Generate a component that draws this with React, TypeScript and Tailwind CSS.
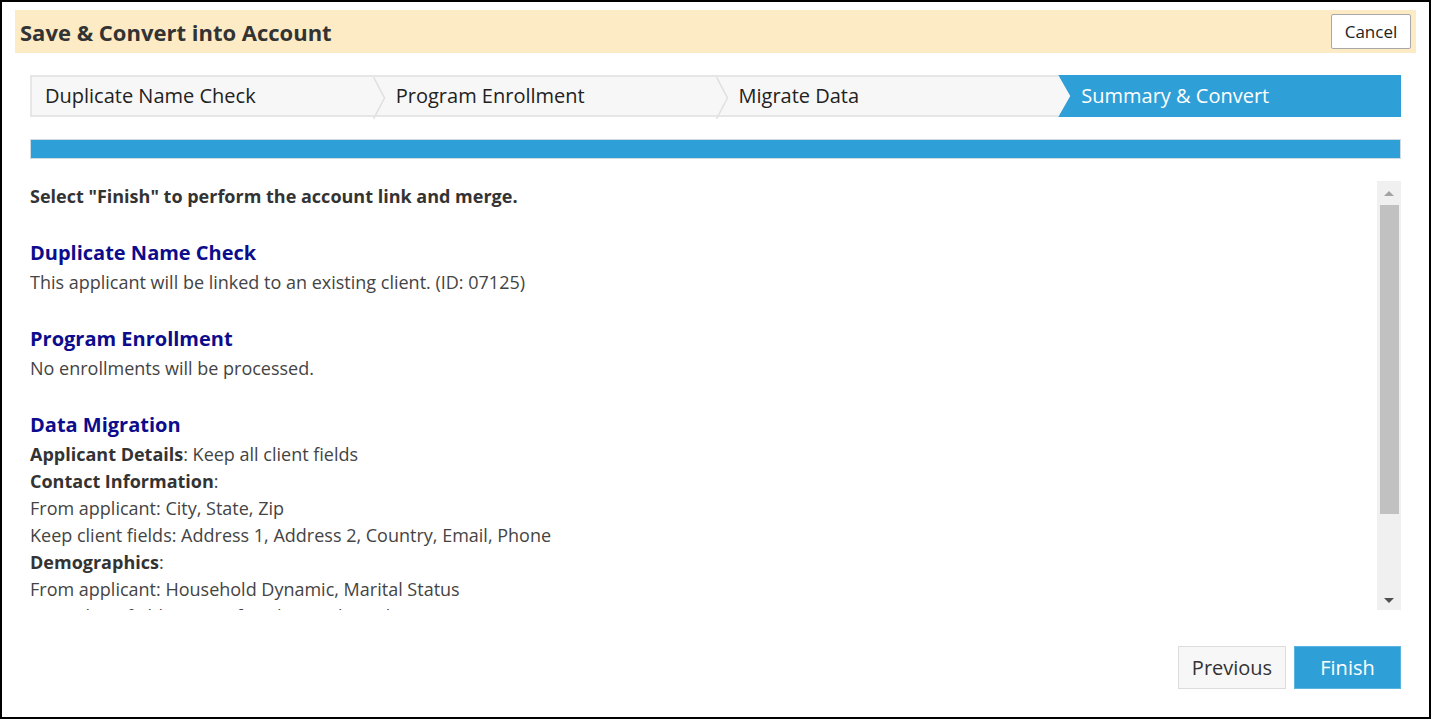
import { useState } from "react";

type Step = { label: string; active?: boolean };

const STEPS: Step[] = [
  { label: "Duplicate Name Check" },
  { label: "Program Enrollment" },
  { label: "Migrate Data" },
  { label: "Summary & Convert", active: true },
];

function Chevron() {
  return (
    <svg className="pointer-events-none absolute left-0 top-0 h-[42px] w-[14px]" viewBox="0 0 14 42" fill="none">
      <path d="M0.5 0 L11.5 21 L0.5 42" stroke="#e0e0e0" strokeWidth="1.5" />
    </svg>
  );
}

function Stepper() {
  return (
    <div className="grid h-[42px] grid-cols-4 bg-[#f7f7f7]">
      {STEPS.map((step, i) =>
        step.active ? (
          <div key={step.label} className="relative flex items-center">
            <div className="absolute inset-0 bg-[#2f9fd7] [clip-path:polygon(0_0,100%_0,100%_100%,0_100%,12px_50%)]" />
            <span className="relative pl-[23px] text-[20px] text-white">{step.label}</span>
          </div>
        ) : (
          <div
            key={step.label}
            className={`relative flex items-center border-y-2 border-[#e6e6e6] ${i === 0 ? "border-l-2 pl-[13px]" : "pl-[23px]"}`}
          >
            {i > 0 && <Chevron />}
            <span className="text-[20px] text-[#222]">{step.label}</span>
          </div>
        )
      )}
    </div>
  );
}

function Scrollbar() {
  return (
    <div className="flex w-[24px] shrink-0 flex-col bg-[#f0f0f0]">
      <div className="flex h-[24px] items-center justify-center">
        <div className="h-0 w-0 border-x-[5px] border-b-[5px] border-x-transparent border-b-[#a3a3a3]" />
      </div>
      <div className="ml-[3px] mr-[2px] h-[309px] bg-[#c1c1c1]" />
      <div className="flex-1" />
      <div className="flex h-[18px] items-start justify-center pt-[6px]">
        <div className="h-0 w-0 border-x-[5px] border-t-[5px] border-x-transparent border-t-[#505050]" />
      </div>
    </div>
  );
}

function Section({ title, children }: { title: string; children: React.ReactNode }) {
  return (
    <section className="mt-[28px]">
      <h2 className="text-[20px] font-bold leading-[30px] text-[#0c0c8c]">{title}</h2>
      <div className="mt-[1px]">{children}</div>
    </section>
  );
}

export default function App() {
  const [open, setOpen] = useState(true);

  return (
    <div className="h-[720px] w-[1433px] bg-white font-['Open_Sans',sans-serif] text-[#444]">
      <div className="flex h-[719px] w-[1431px] flex-col border-2 border-black">
        <header className="mx-[13px] mt-[8px] flex h-[43px] items-center justify-between bg-[#fdebc5] pl-[5px] pr-[5px]">
          <h1 className="pt-[1px] text-[22px] font-bold text-[#333]">Save &amp; Convert into Account</h1>
          <button
            onClick={() => setOpen(!open)}
            className="h-[35px] w-[80px] rounded-[2px] border border-[#a8a8a8] bg-white text-[17px] text-[#222]"
          >
            Cancel
          </button>
        </header>

        <div className="mx-[28px] mt-[22px]">
          <Stepper />
          <div className="mt-[22px] h-[20px] border border-[#cfdbe3] bg-[#2f9fd7]" />
        </div>

        <div className="mx-[28px] mt-[22px] flex h-[429px]">
          <div className="flex-1 overflow-hidden pt-[2px] text-[18px] leading-[27px]">
            <p className="font-bold text-[#333]">Select "Finish" to perform the account link and merge.</p>

            <Section title="Duplicate Name Check">
              <p>This applicant will be linked to an existing client. (ID: 07125)</p>
            </Section>

            <Section title="Program Enrollment">
              <p>No enrollments will be processed.</p>
            </Section>

            <Section title="Data Migration">
              <p>
                <b className="text-[#333]">Applicant Details</b>: Keep all client fields
              </p>
              <p>
                <b className="text-[#333]">Contact Information</b>:
              </p>
              <p>From applicant: City, State, Zip</p>
              <p>Keep client fields: Address 1, Address 2, Country, Email, Phone</p>
              <p>
                <b className="text-[#333]">Demographics</b>:
              </p>
              <p>From applicant: Household Dynamic, Marital Status</p>
              <p>Keep client fields: Date of Birth, Gender, Ethnicity, Race</p>
              <p>
                <b className="text-[#333]">Income</b>:
              </p>
              <p>Keep all client fields</p>
            </Section>
          </div>
          <Scrollbar />
        </div>

        <div className="mx-[28px] mt-[36px] flex justify-end gap-[8px]">
          <button className="h-[43px] w-[108px] border border-[#dcdcdc] bg-[#f7f7f7] text-[20px] text-[#333]">
            Previous
          </button>
          <button className="h-[43px] w-[107px] border border-[#5ab4e0] bg-[#2f9fd7] text-[20px] text-white">
            Finish
          </button>
        </div>
      </div>
    </div>
  );
}
